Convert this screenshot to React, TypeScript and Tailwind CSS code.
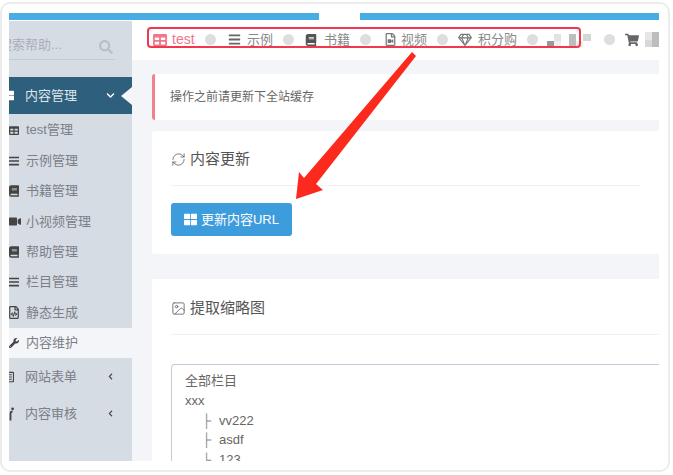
import React from "react";
import { RefreshCw, Image as ImageIcon } from "lucide-react";
import {
  FaTable, FaBars, FaBook, FaVideo, FaWrench, FaShoppingCart, FaRegFileVideo, FaRegGem,
  FaThLarge, FaSearch, FaChevronDown, FaChevronLeft, FaRegFileCode, FaRegListAlt,
} from "react-icons/fa";

const font = "[font-family:'Liberation_Sans','Noto_Sans_CJK_SC',sans-serif]";

function Dot({ ml }: { ml: string }) {
  return <span className={`w-[11px] h-[11px] rounded-full bg-[#dedede] shrink-0 ${ml}`} />;
}

const sub = [
  { label: "test管理", icon: <FaTable size={13} /> },
  { label: "示例管理", icon: <FaBars size={12} /> },
  { label: "书籍管理", icon: <FaBook size={12} /> },
  { label: "小视频管理", icon: <FaVideo size={13} className="-mr-[2px]" /> },
  { label: "帮助管理", icon: <FaBook size={12} /> },
  { label: "栏目管理", icon: <FaBars size={12} /> },
  { label: "静态生成", icon: <FaRegFileCode size={13} /> },
];

function SubRow({ label, icon, active }: { label: string; icon: React.ReactNode; active?: boolean }) {
  return (
    <div className={`h-[30.4px] flex items-center text-[13px] text-[#7b8088] ${active ? "bg-[#f3f5f8]" : ""}`}>
      <span className="w-[10px] flex justify-end text-[#444] shrink-0">{icon}</span>
      <span className="ml-[7px] whitespace-nowrap">{label}</span>
    </div>
  );
}

function GroupRow({ label, icon }: { label: string; icon: React.ReactNode }) {
  return (
    <div className="h-[37px] flex items-center text-[13px] text-[#7b8088]">
      <span className="w-[5px] flex justify-end text-[#444] shrink-0 overflow-hidden">{icon}</span>
      <span className="ml-[11px] whitespace-nowrap w-[82px]">{label}</span>
      <FaChevronLeft size={7} className="text-[#444]" />
    </div>
  );
}

function TreeRow({ glyph, label }: { glyph: string; label: string }) {
  return (
    <div className="pl-[17px] flex">
      <span className="w-[17px] text-[#8a8a8a] font-light">{glyph}</span>
      <span>{label}</span>
    </div>
  );
}

export default function App() {
  return (
    <div className={`relative w-[673px] h-[475px] bg-white overflow-hidden ${font}`}>
      <div className="mt-[2px] w-[670px] h-[470px] border-2 border-[#ececec] rounded-[10px] pl-[7px] pr-[9px] pt-[9px] pb-[9px]">
        <div className="flex flex-col h-full w-[650px] overflow-hidden">
          <div className="flex h-[7px] shrink-0 mb-[1px]">
            <div className="w-[310px] bg-[#47ade2]" />
            <div className="w-[41px]" />
            <div className="flex-1 bg-[#47ade2]" />
          </div>
          <div className="flex flex-1 min-h-0">
            <aside className="w-[123px] shrink-0 bg-[#d6dce4] overflow-hidden">
              <div className="h-[56px] pt-[15px]">
                <div className="h-[24px] w-[106px] border-b border-[#c5cbd3] flex items-start text-[13px] text-[#a9afb7] whitespace-nowrap overflow-hidden relative">
                  <span className="-ml-[10px] leading-[18px]">搜索帮助...</span>
                  <FaSearch size={14} className="absolute right-[2px] top-[4px] text-[#b9bfc7]" />
                </div>
              </div>
              <div className="h-[37px] bg-[#2e5f7c] flex items-center text-[13px] text-[#dfe6ec] relative">
                <span className="w-[5px] flex justify-end overflow-hidden text-white shrink-0">
                  <FaThLarge size={11} className="shrink-0" />
                </span>
                <span className="ml-[11px] w-[81px] whitespace-nowrap">内容管理</span>
                <FaChevronDown size={9} className="text-white" />
                <span className="absolute right-0 top-[10px] w-0 h-0 border-y-[9px] border-y-transparent border-r-[11px] border-r-[#f3f5f8]" />
              </div>
              <div className="h-[1px]" />
              {sub.map((s) => <SubRow key={s.label} {...s} />)}
              <SubRow label="内容维护" icon={<FaWrench size={12} />} active />
              <GroupRow label="网站表单" icon={<FaRegListAlt size={12} className="shrink-0" />} />
              <GroupRow
                label="内容审核"
                icon={
                  <svg width="5" height="14" viewBox="0 0 5 14" className="shrink-0">
                    <circle cx="3.6" cy="1.8" r="1.4" fill="currentColor" />
                    <path d="M1.5 13.5V6.5Q1.5 4.5 3.5 4.5" stroke="currentColor" strokeWidth="1.8" fill="none" />
                  </svg>
                }
              />
            </aside>
            <main className="flex-1 min-w-0 bg-[#f3f5f8] overflow-hidden">
              <nav className="h-[39px] pb-[2px] bg-white flex items-center text-[13px] text-[#8a8a8a] whitespace-nowrap">
                <FaTable size={14} className="ml-[21px] text-[#f2758a] shrink-0" />
                <span className="ml-[5px] w-[24px] text-[14px] text-[#f2758a]">test</span>
                <Dot ml="ml-[9px]" />
                <FaBars size={13} className="ml-[12px] text-[#666] shrink-0" />
                <span className="ml-[6px] w-[26px]">示例</span>
                <Dot ml="ml-[10px]" />
                <FaBook size={12} className="ml-[11px] text-[#555] shrink-0" />
                <span className="ml-[7px] w-[26px]">书籍</span>
                <Dot ml="ml-[10px]" />
                <FaRegFileVideo size={13} className="ml-[13px] text-[#777] shrink-0" />
                <span className="ml-[4px] w-[26px]">视频</span>
                <Dot ml="ml-[10px]" />
                <FaRegGem size={14} className="ml-[10px] text-[#777] shrink-0" />
                <span className="ml-[6px] w-[39px]">积分购</span>
                <Dot ml="ml-[10px]" />
                <svg width="46" height="16" className="ml-[9px] shrink-0">
                  <rect x="0" y="9" width="7" height="6" fill="#999" />
                  <rect x="7" y="2" width="7" height="7" fill="#e2e2e2" />
                  <rect x="7" y="9" width="7" height="6" fill="#f0f0f0" />
                  <rect x="22" y="2" width="7" height="14" fill="#bdbdbd" />
                  <rect x="29" y="9" width="7" height="6" fill="#eee" />
                  <rect x="36" y="2" width="8" height="7" fill="#d6d6d6" />
                </svg>
                <Dot ml="ml-[11px]" />
                <FaShoppingCart size={14} className="ml-[10px] text-[#666] shrink-0" />
                <svg width="14" height="15" className="ml-[6px] shrink-0">
                  <rect x="0" y="0" width="7" height="8" fill="#e6e6e6" />
                  <rect x="7" y="0" width="7" height="15" fill="#bdbdbd" />
                  <rect x="0" y="8" width="7" height="7" fill="#d8d8d8" />
                </svg>
              </nav>
              <div className="pl-[20px] pt-[14px]">
                <div className="h-[46px] bg-white border-l-[3px] border-[#f2808f] rounded-l-[3px] flex items-center pl-[15px] text-[12px] text-[#666]">
                  操作之前请更新下全站缓存
                </div>
                <section className="mt-[11px] h-[123px] bg-white rounded-l-[3px] px-[19px]">
                  <div className="h-[55px] pt-[2px] border-b border-[#eff1f3] flex items-center text-[15px] text-[#555]">
                    <RefreshCw size={15} strokeWidth={1.4} className="text-[#666] mr-[4px]" />
                    内容更新
                  </div>
                  <button className="mt-[17px] w-[121px] h-[33px] bg-[#3d9cdb] rounded-[3px] text-white text-[13px] flex items-center justify-center">
                    <FaThLarge size={13} className="mr-[4px]" />
                    更新内容URL
                  </button>
                </section>
                <section className="mt-[25px] h-[200px] bg-white pl-[19px] overflow-hidden">
                  <div className="h-[56px] pt-[3px] border-b border-[#eff1f3] flex items-center text-[15px] text-[#555]">
                    <ImageIcon size={15} strokeWidth={1.4} className="text-[#666] mr-[4px]" />
                    提取缩略图
                  </div>
                  <div className="mt-[29px] h-[120px] border-t border-l border-[#c3cbd9] rounded-tl-[4px] pl-[13px] pt-[6px] text-[13px] leading-[19.8px] text-[#666]">
                    <div>全部栏目</div>
                    <div>xxx</div>
                    <TreeRow glyph="├" label="vv222" />
                    <TreeRow glyph="├" label="asdf" />
                    <TreeRow glyph="└" label="123" />
                  </div>
                </section>
              </div>
            </main>
          </div>
        </div>
      </div>
      <div className="absolute left-[147px] top-[27px] w-[434px] h-[21px] border-2 border-[#f2384f] rounded-[4px]" />
      <svg className="absolute left-0 top-0 pointer-events-none" width="673" height="475">
        <polygon points="412,52 416,56 316,184 323,190 296,199 299,172 304,178" fill="#fb2a1c" />
      </svg>
    </div>
  );
}
